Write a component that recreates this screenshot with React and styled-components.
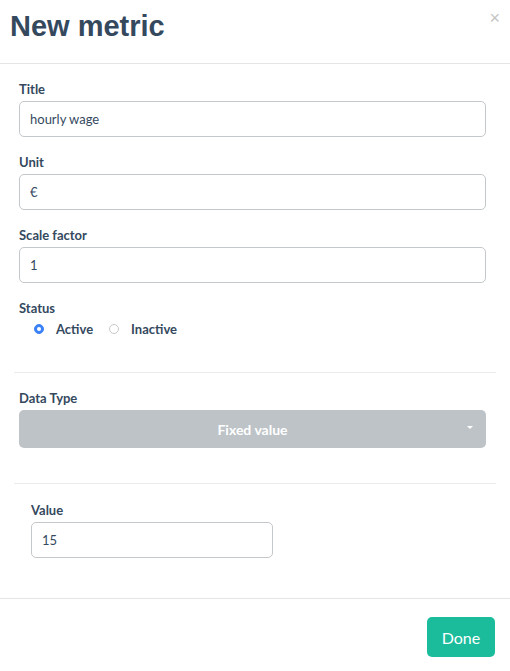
import React, { useState } from "react";
import styled, { createGlobalStyle } from "styled-components";

const GlobalStyle = createGlobalStyle`
  html, body {
    margin: 0;
    padding: 0;
    background: #fff;
  }
  body {
    font-family: Lato, "Open Sans", sans-serif;
    color: #34495e;
  }
  * {
    box-sizing: border-box;
  }
`;

const Modal = styled.div`
  width: 510px;
  height: 671px;
  background: #fff;
  display: flex;
  flex-direction: column;
`;

const Header = styled.div`
  height: 64px;
  border-bottom: 1px solid #e5e5e5;
  display: flex;
  justify-content: space-between;
  align-items: flex-start;
  padding: 8px 10px 0 10px;
`;

const Heading = styled.h1`
  margin: 0;
  font-family: "Liberation Sans", Arial, sans-serif;
  font-size: 29px;
  font-weight: 700;
  line-height: 36px;
  color: #34495e;
`;

const Close = styled.button`
  border: none;
  background: none;
  padding: 0;
  margin-top: 0;
  font-family: "Liberation Sans", Arial, sans-serif;
  font-size: 18px;
  line-height: 20px;
  color: #c4c4c4;
  cursor: pointer;
`;

const Body = styled.div`
  flex: 1;
  padding: 0 14px;
`;

const Section = styled.div`
  padding: ${(p) => p.$pad || "16px 10px 34px 5px"};
  border-bottom: ${(p) => (p.$last ? "none" : "1px solid #ebebeb")};
`;

const Group = styled.div`
  margin-bottom: ${(p) => (p.$last ? "0" : "16px")};
  width: ${(p) => p.$width || "auto"};
`;

const Label = styled.div`
  font-size: 13px;
  font-weight: 700;
  line-height: 18px;
  margin-bottom: 3px;
  color: #34495e;
`;

const Input = styled.input`
  display: block;
  width: 100%;
  height: 36px;
  border: 1px solid #c3c8cc;
  border-radius: 5px;
  padding: 0 10px;
  font-family: Lato, sans-serif;
  font-size: 13px;
  color: #34495e;
  background: #fff;
  outline: none;
`;

const RadioRow = styled.div`
  display: flex;
  align-items: center;
  height: 18px;
  padding-left: 15px;
  gap: 16px;
`;

const RadioOption = styled.label`
  display: flex;
  align-items: center;
  gap: 12px;
  font-size: 13px;
  font-weight: 700;
  color: #34495e;
  cursor: pointer;
`;

const RadioDot = styled.span`
  width: 10px;
  height: 10px;
  border-radius: 50%;
  display: inline-flex;
  align-items: center;
  justify-content: center;
  background: ${(p) => (p.$checked ? "#3b82f6" : "#fff")};
  border: 1px solid ${(p) => (p.$checked ? "#3b82f6" : "#c9c9c9")};

  &::after {
    content: "";
    width: 4px;
    height: 4px;
    border-radius: 50%;
    background: #fff;
    display: ${(p) => (p.$checked ? "block" : "none")};
  }
`;

const Select = styled.div`
  position: relative;
  height: 38px;
  border-radius: 5px;
  background: #bdc3c7;
  color: #fff;
  font-size: 14px;
  font-weight: 700;
  display: flex;
  align-items: center;
  justify-content: center;
  cursor: pointer;
`;

const Caret = styled.span`
  position: absolute;
  right: 13px;
  top: 16px;
  width: 0;
  height: 0;
  border-left: 3px solid transparent;
  border-right: 3px solid transparent;
  border-top: 3px solid #fff;
`;

const Footer = styled.div`
  border-top: 1px solid #e5e5e5;
  padding: 18px 15px 14px;
  display: flex;
  justify-content: flex-end;
`;

const DoneButton = styled.button`
  width: 68px;
  height: 40px;
  border: none;
  border-radius: 5px;
  background: #1abc9c;
  color: #fff;
  font-family: Lato, sans-serif;
  font-size: 16px;
  font-weight: 400;
  cursor: pointer;
`;

export default function App() {
  const [status, setStatus] = useState("active");

  return (
    <>
      <GlobalStyle />
      <Modal>
        <Header>
          <Heading>New metric</Heading>
          <Close aria-label="Close">×</Close>
        </Header>
        <Body>
          <Section>
            <Group>
              <Label>Title</Label>
              <Input defaultValue="hourly wage" />
            </Group>
            <Group>
              <Label>Unit</Label>
              <Input defaultValue="€" />
            </Group>
            <Group>
              <Label>Scale factor</Label>
              <Input defaultValue="1" />
            </Group>
            <Group $last>
              <Label>Status</Label>
              <RadioRow>
                <RadioOption onClick={() => setStatus("active")}>
                  <RadioDot $checked={status === "active"} />
                  Active
                </RadioOption>
                <RadioOption onClick={() => setStatus("inactive")}>
                  <RadioDot $checked={status === "inactive"} />
                  Inactive
                </RadioOption>
              </RadioRow>
            </Group>
          </Section>
          <Section $pad="16px 10px 35px 5px">
            <Group $last>
              <Label>Data Type</Label>
              <Select>
                Fixed value
                <Caret />
              </Select>
            </Group>
          </Section>
          <Section $pad="17px 17px 0" $last>
            <Group $last $width="242px">
              <Label>Value</Label>
              <Input defaultValue="15" />
            </Group>
          </Section>
        </Body>
        <Footer>
          <DoneButton>Done</DoneButton>
        </Footer>
      </Modal>
    </>
  );
}
